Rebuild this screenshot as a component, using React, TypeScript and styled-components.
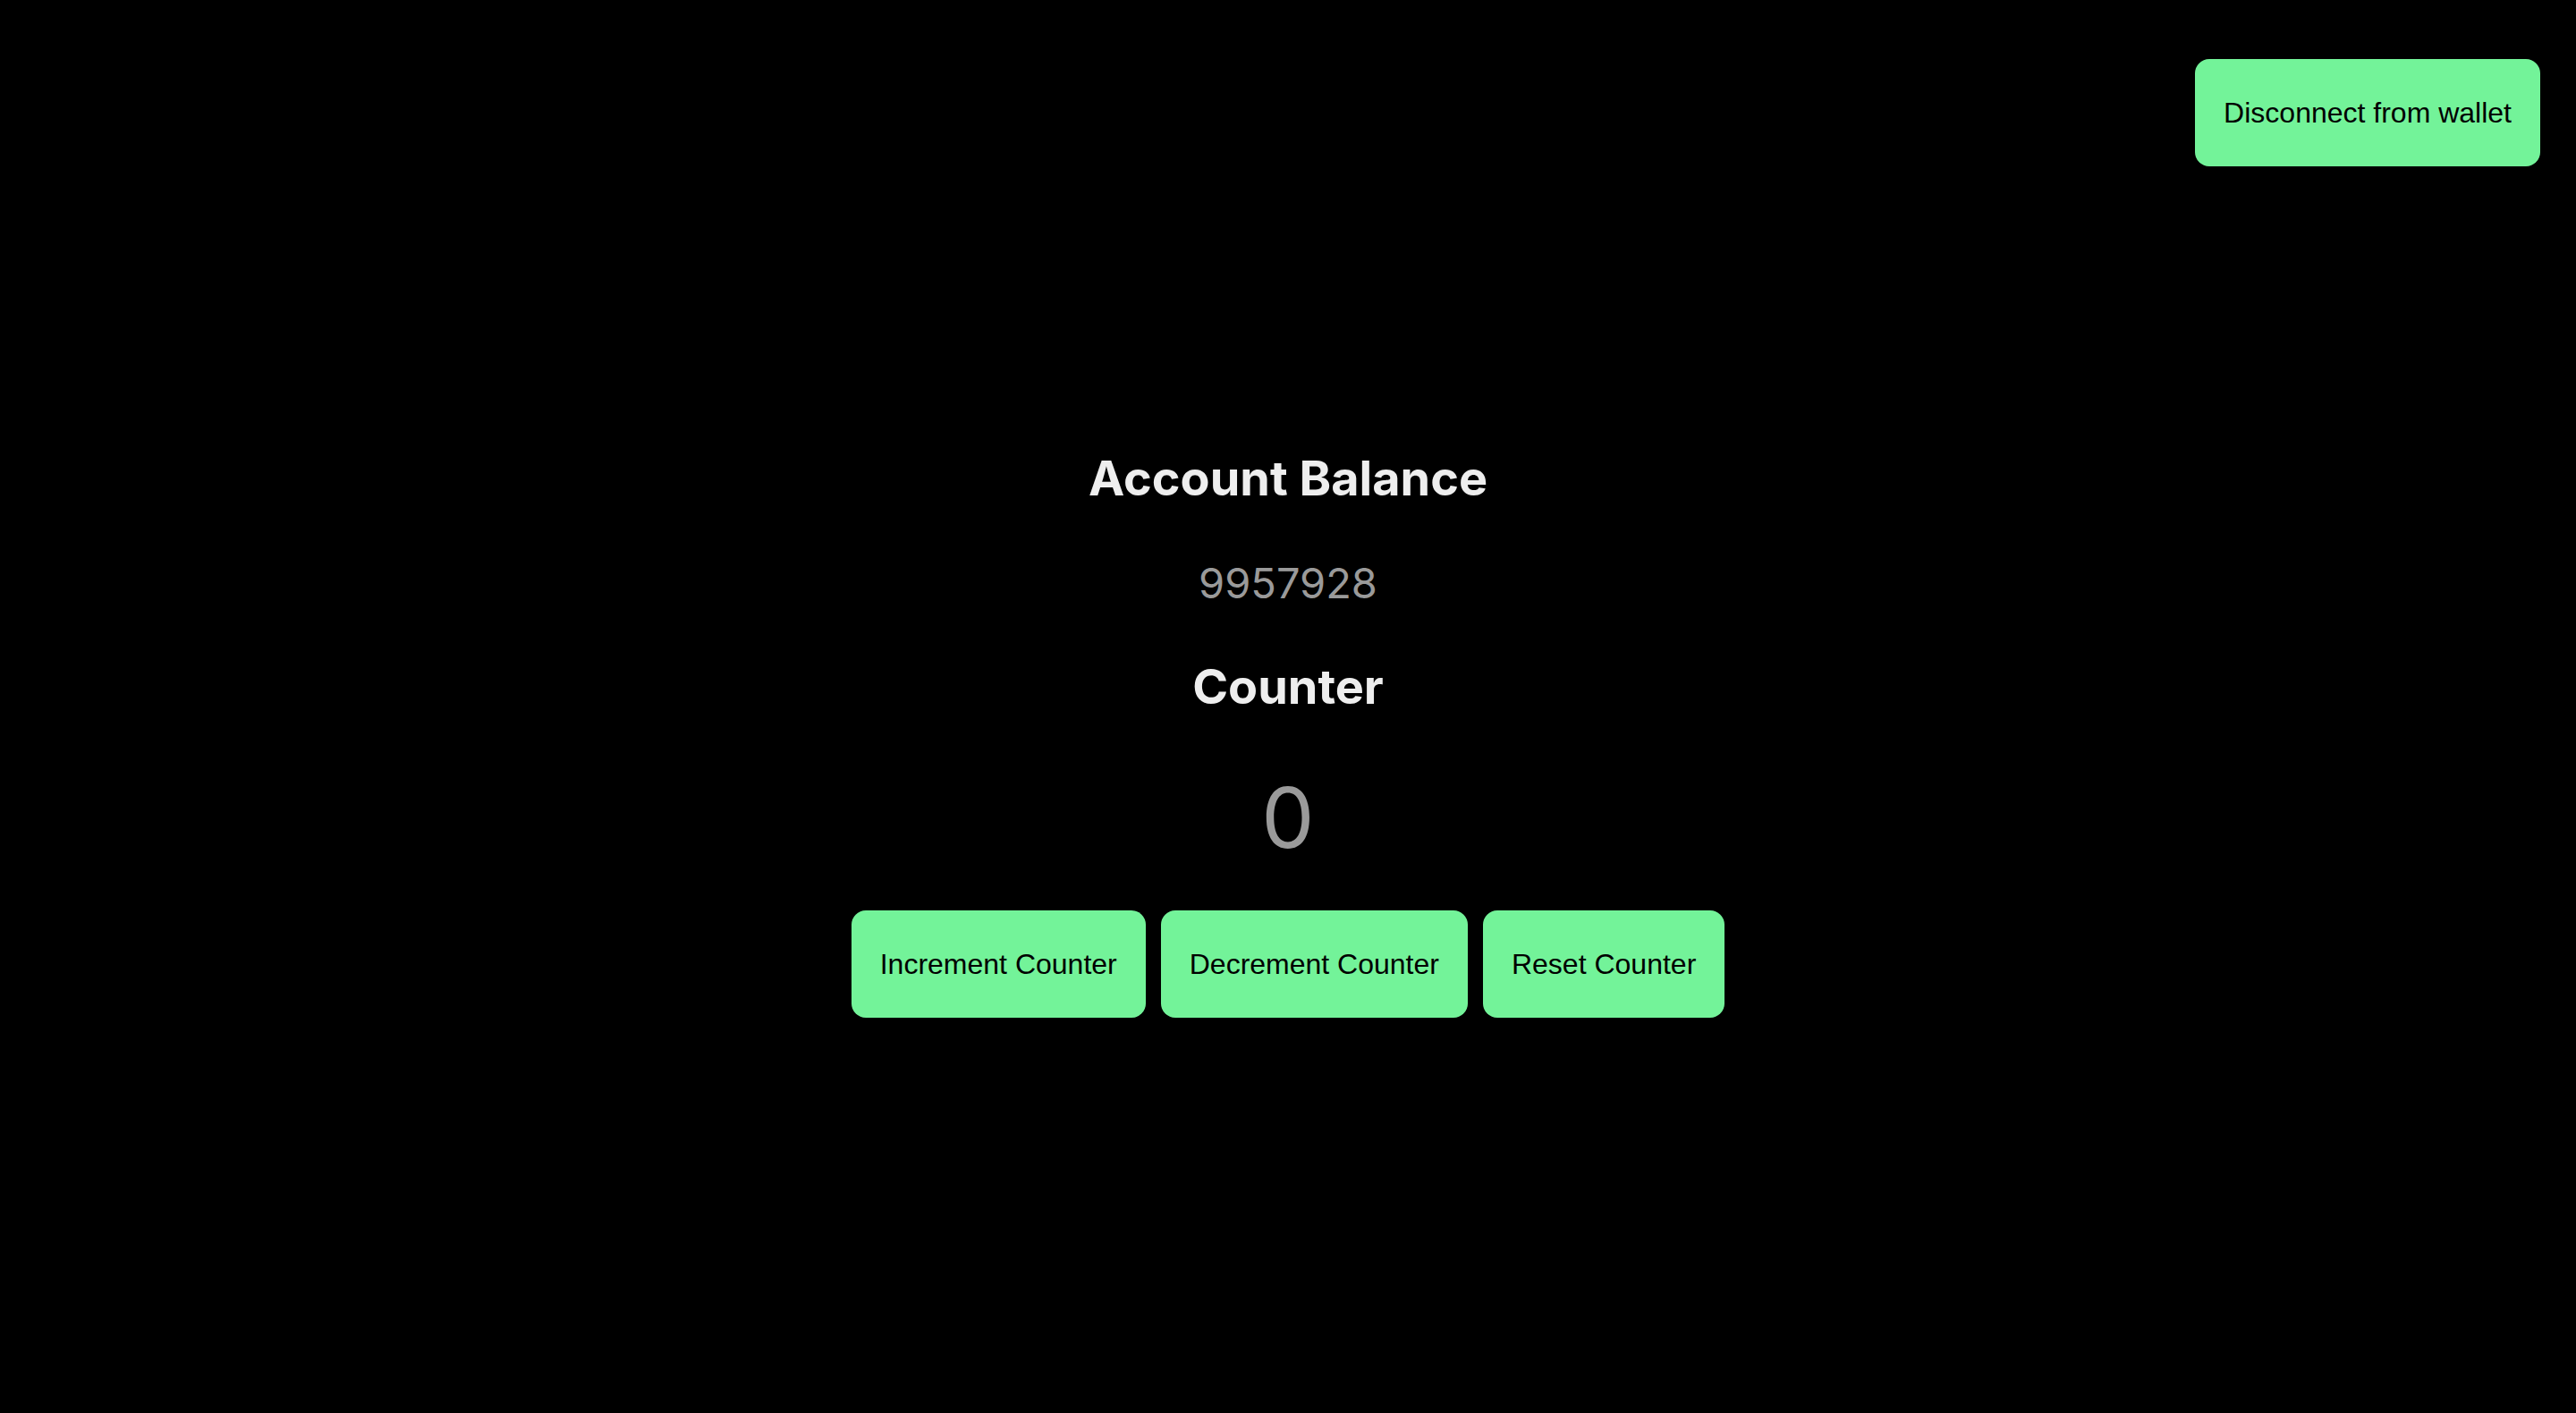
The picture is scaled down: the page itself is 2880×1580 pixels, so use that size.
import React from "react";
import styled, { createGlobalStyle } from "styled-components";

const Global = createGlobalStyle`
  html, body {
    margin: 0;
    padding: 0;
    background: #000000;
  }
  body {
    font-family: "Inter", "Noto Sans", sans-serif;
    color: #eeeeee;
  }
`;

const Page = styled.div`
  min-height: 100vh;
  display: flex;
  flex-direction: column;
`;

const Header = styled.header`
  display: flex;
  justify-content: flex-end;
  padding: 66px 40px 0 40px;
`;

const Main = styled.main`
  display: flex;
  flex-direction: column;
  align-items: center;
  padding-top: 322px;
`;

const Heading = styled.h2<{ $gap: number }>`
  margin: ${(p) => p.$gap}px 0 0 0;
  font-family: "Inter", sans-serif;
  font-weight: 700;
  font-size: 54px;
  line-height: 54px;
  color: #eeeeee;
`;

const Value = styled.div<{ $size: number; $gap: number }>`
  margin-top: ${(p) => p.$gap}px;
  font-family: "Inter", sans-serif;
  font-weight: 400;
  font-size: ${(p) => p.$size}px;
  line-height: ${(p) => p.$size}px;
  color: #9a9a9a;
`;

const ButtonRow = styled.div`
  display: flex;
  gap: 17px;
  margin-top: 57px;
`;

const Button = styled.button`
  font-family: "Liberation Sans", Arial, sans-serif;
  font-size: 32px;
  line-height: 36px;
  padding: 42px 32px;
  border: none;
  border-radius: 16px;
  background: #73f399;
  color: #000000;
  cursor: pointer;
`;

export default function App() {
  return (
    <>
      <Global />
      <Page>
        <Header>
          <Button>Disconnect from wallet</Button>
        </Header>
        <Main>
          <Heading $gap={0}>Account Balance</Heading>
          <Value $size={47} $gap={66}>9957928</Value>
          <Heading $gap={66}>Counter</Heading>
          <Value $size={94} $gap={72}>0</Value>
          <ButtonRow>
            <Button>Increment Counter</Button>
            <Button>Decrement Counter</Button>
            <Button>Reset Counter</Button>
          </ButtonRow>
        </Main>
      </Page>
    </>
  );
}
